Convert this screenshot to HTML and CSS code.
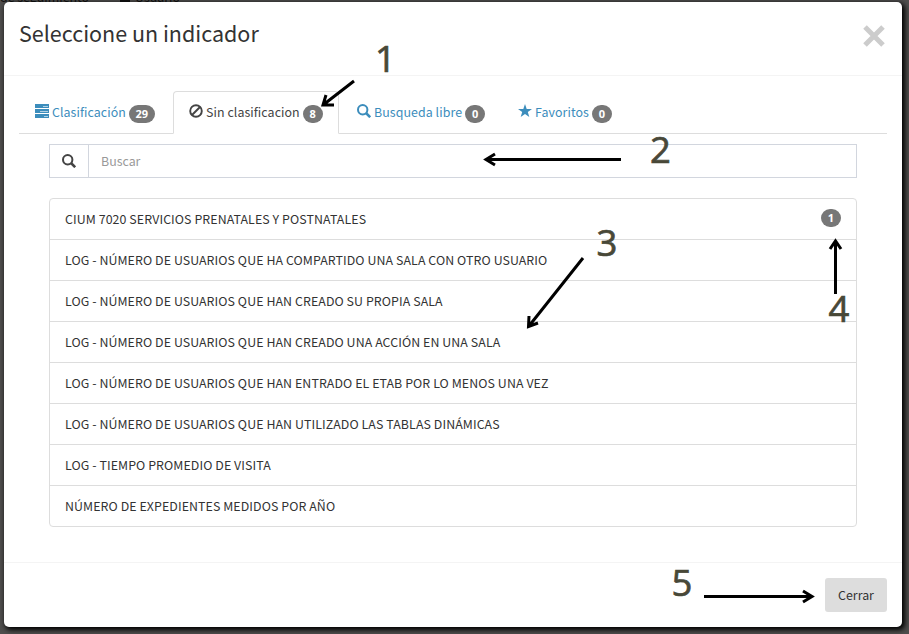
FILE: index.html
```html
<!DOCTYPE html>
<html lang="es">
<head>
<meta charset="utf-8">
<title>Seleccione un indicador</title>
<link rel="stylesheet" href="styles.css">
</head>
<body>
<div class="backdrop-text"><span class="bt1">de seguimiento</span><i class="bt-icon"></i><span class="bt2">Usuario</span></div>
<div class="modal">
  <header class="modal-header">
    <h4 class="title">Seleccione un indicador</h4>
    <button class="close" aria-label="Cerrar"><svg width="22" height="22" viewBox="0 0 22 22"><path d="M2 2L20 20M20 2L2 20" stroke="#ccc" stroke-width="5" fill="none"/></svg></button>
  </header>
  <main class="modal-body">
    <nav class="tabs">
      <a class="tab t1"><svg class="icon" viewBox="0 0 14 14"><path d="M0 0H14V4H0ZM0 5H14V9H0ZM0 10H14V14H0Z" fill="#3c8dbc"/><path d="M8 2.500H13M5 7.500H13M9 12.500H13" stroke="#fff" stroke-width="1" opacity=".6"/></svg><span class="label">Clasificación</span><span class="badge">29</span></a>
      <a class="tab t2 active"><svg class="icon" viewBox="0 0 14 14"><circle cx="7" cy="7" r="5.8" fill="none" stroke="#444" stroke-width="1.9"/><path d="M3 11L11 3" stroke="#444" stroke-width="2"/></svg><span class="label">Sin clasificacion</span><span class="badge">8</span></a>
      <a class="tab t3"><svg class="icon" viewBox="0 0 14 14"><circle cx="5.7" cy="5.7" r="4.7" fill="none" stroke="#3c8dbc" stroke-width="2"/><path d="M9 9L13.200 13.200" stroke="#3c8dbc" stroke-width="2.600"/></svg><span class="label">Busqueda libre</span><span class="badge">0</span></a>
      <a class="tab t4"><svg class="icon" viewBox="0 0 14 14"><path d="M7 0L8.700 4.900H14L9.800 8L11.300 13L7 10L2.700 13L4.200 8L0 4.900H5.300Z" fill="#3c8dbc"/></svg><span class="label">Favoritos</span><span class="badge">0</span></a>
    </nav>
    <div class="content">
      <div class="search">
        <span class="addon"><svg class="icon" viewBox="0 0 14 14"><circle cx="5.700" cy="5.700" r="4.700" fill="none" stroke="#444" stroke-width="2"/><path d="M9 9L13.200 13.200" stroke="#444" stroke-width="2.600"/></svg></span>
        <span class="field">Buscar</span>
      </div>
      <ul class="list">
        <li><span>CIUM 7020 SERVICIOS PRENATALES Y POSTNATALES</span><span class="badge">1</span></li>
        <li><span>LOG - NÚMERO DE USUARIOS QUE HA COMPARTIDO UNA SALA CON OTRO USUARIO</span></li>
        <li><span>LOG - NÚMERO DE USUARIOS QUE HAN CREADO SU PROPIA SALA</span></li>
        <li><span>LOG - NÚMERO DE USUARIOS QUE HAN CREADO UNA ACCIÓN EN UNA SALA</span></li>
        <li><span>LOG - NÚMERO DE USUARIOS QUE HAN ENTRADO EL ETAB POR LO MENOS UNA VEZ</span></li>
        <li><span>LOG - NÚMERO DE USUARIOS QUE HAN UTILIZADO LAS TABLAS DINÁMICAS</span></li>
        <li><span>LOG - TIEMPO PROMEDIO DE VISITA</span></li>
        <li><span>NÚMERO DE EXPEDIENTES MEDIDOS POR AÑO</span></li>
      </ul>
    </div>
  </main>
  <footer class="modal-footer"><button class="btn">Cerrar</button></footer>
</div>
<svg class="notes" width="909" height="634" viewBox="0 0 909 634">
  <g class="arrows">
    <path d="M354 81L323 105M326 95L323 105L334 105"/>
    <path d="M621 159.500H486M495 154L486 159.500L495 165"/>
    <path d="M583 258L529 326M529 316L528.500 326.500L538 323"/>
    <path d="M835.500 294V241M830 249L835.500 241L841 249"/>
    <path d="M704 596.500H812M803 591L812 596.500L803 602"/>
  </g>
  <g class="numbers">
    <text x="375" y="72">1</text>
    <text x="650" y="163">2</text>
    <text x="596.500" y="256">3</text>
    <text x="828.500" y="322">4</text>
    <text x="671.500" y="596">5</text>
  </g>
</svg>
</body>
</html>
```
FILE: styles.css
```css
* { box-sizing: border-box; }
body {
  margin: 0;
  width: 909px;
  height: 634px;
  padding: 2px 0 0 4px;
  overflow: hidden;
  background: #4f4e4d;
  font-family: "Noto Sans CJK SC", "Noto Sans", sans-serif;
  font-size: 12.4px;
  line-height: 20px;
  color: #333;
}
.backdrop-text {
  position: absolute;
  left: 0;
  top: -13px;
  display: flex;
  align-items: flex-end;
  height: 20px;
  color: #111;
  white-space: nowrap;
}
.bt1 { width: 120px; }
.bt-icon { width: 10px; height: 10px; margin-bottom: 5px; background: #111; }
.bt2 { margin-left: 5px; }
.modal {
  position: relative;
  display: flex;
  flex-direction: column;
  width: 898px;
  height: 625px;
  background: #fff;
  border-radius: 5px;
  box-shadow: 2px 2px 5px 1px #000;
}
.modal-header {
  display: flex;
  justify-content: space-between;
  height: 74px;
  padding: 14px 15px;
  border-bottom: 1px solid #f4f4f4;
}
.title { margin: 0; font-weight: 400; font-size: 21.5px; line-height: 34px; }
.close { width: 22px; height: 22px; margin: 9px 2px 0 0; padding: 0; border: 0; background: none; }
.close svg { display: block; }
.modal-body { flex: 1; padding: 15px; }
.tabs { display: flex; height: 43px; border-bottom: 1px solid #ddd; }
.tab { display: flex; height: 43px; padding: 10px 15px 0 16px; color: #3c8dbc; border: 1px solid transparent; border-radius: 4px 4px 0 0; white-space: nowrap; letter-spacing: .07px; }
.tab.active { color: #444; background: #fff; border-color: #ddd #ddd #fff; }
.t1 { width: 154px; padding-left: 15px; }
.t2 { width: 166px; padding-left: 15px; }
.t3 { width: 162px; padding-left: 17px; }
.t4 { width: 127px; }
.icon { flex: none; width: 14px; height: 14px; margin-right: 3px; }
.tab .icon { margin-top: 2px; }
.label { margin-right: 3px; }
.badge {
  flex: none;
  height: 18px;
  min-width: 20px;
  margin-top: 3px;
  padding: 0 6.5px;
  border-radius: 9px;
  background: #777;
  color: #fff;
  font: 700 11px/18px "Open Sans", sans-serif;
  letter-spacing: 0;
  text-align: center;
}
.content { padding: 10px 30px 0; }
.search { display: flex; height: 34px; border: 1px solid #d2d6de; }
.addon { display: flex; align-items: center; width: 39px; padding-left: 12px; border-right: 1px solid #d2d6de; }
.field { padding: 6px 12px; color: #999; }
.list { margin: 20px 0 0; padding: 0; list-style: none; border: 1px solid #ddd; border-radius: 4px; letter-spacing: .078px; }
.list li { display: flex; justify-content: space-between; height: 41px; padding: 10px 15px; border-bottom: 1px solid #ddd; white-space: nowrap; }
.list li:last-child { height: 40px; border-bottom: 0; }
.list .badge { margin-top: 0; }
.modal-footer { display: flex; justify-content: flex-end; height: 65px; padding: 15px; border-top: 1px solid #f4f4f4; }
.btn { width: 62px; height: 34px; padding: 0; border: 0; border-radius: 3px; background: #ddd; color: #333; font: inherit; }
.notes { position: absolute; left: 0; top: 0; pointer-events: none; }
.arrows { fill: none; stroke: #000; stroke-width: 3; }
.numbers { fill: #484838; stroke: #484838; stroke-width: .7; font: 36.5px "Open Sans", sans-serif; }
```
